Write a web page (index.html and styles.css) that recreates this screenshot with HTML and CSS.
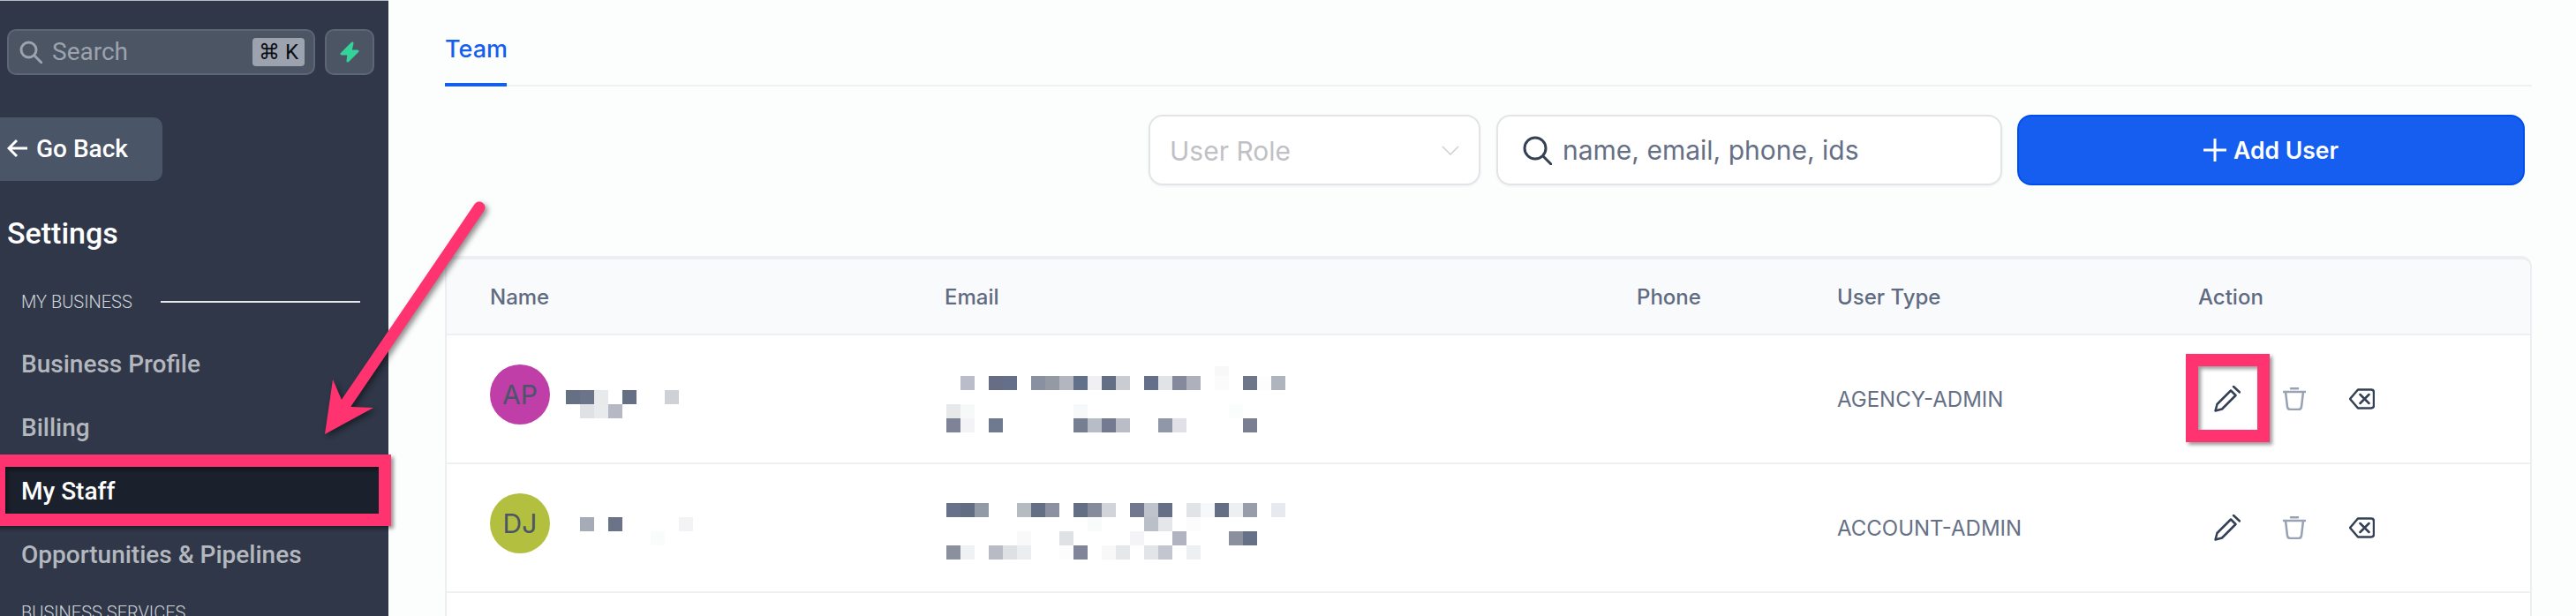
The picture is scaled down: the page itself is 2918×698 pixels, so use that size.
FILE: index.html
```html
<!DOCTYPE html>
<html lang="en">
<head>
<meta charset="utf-8">
<title>Settings - My Staff</title>
<link rel="stylesheet" href="styles.css">
</head>
<body>
<div class="app">
  <aside class="sidebar">
    <div class="search-row">
      <div class="side-search">
        <svg class="side-search-icon" viewBox="0 0 26 26"><circle cx="10.500" cy="10.500" r="8.500"/><path d="M17 17l8 8"/></svg>
        <span class="side-search-text">Search</span>
        <kbd class="kbd">⌘ K</kbd>
      </div>
      <div class="bolt-btn">
        <svg class="bolt" viewBox="0 0 22 24"><path d="M14 2 2 14h8l-1 8 11-11h-8z"/></svg>
      </div>
    </div>
    <div class="back">
      <svg class="back-arrow" viewBox="0 0 24 22"><path d="M23 11H2M11 2l-9 9 9 9"/></svg>
      <span>Go Back</span>
    </div>
    <h1 class="side-title">Settings</h1>
    <div class="section"><span>MY BUSINESS</span><i class="section-line"></i></div>
    <nav class="nav">
      <a class="nav-item">Business Profile</a>
      <a class="nav-item">Billing</a>
      <a class="nav-item active">My Staff</a>
      <a class="nav-item">Opportunities &amp; Pipelines</a>
    </nav>
    <div class="section section-two"><span>BUSINESS SERVICES</span></div>
  </aside>

  <main class="main">
    <div class="tabs"><a class="tab">Team</a></div>
    <div class="controls">
      <div class="field role">
        <span class="role-text">User Role</span>
        <svg class="chevron" viewBox="0 0 20 11"><path d="M1 1l9 9 9-9"/></svg>
      </div>
      <div class="field query">
        <svg class="query-icon" viewBox="0 0 33 33"><circle cx="14" cy="14" r="12"/><path d="M23 23l9 9"/></svg>
        <span>name, email, phone, ids</span>
      </div>
      <button class="add">
        <svg class="plus" viewBox="0 0 26 26"><path d="M13 0v26M0 13h26"/></svg>
        <span>Add User</span>
      </button>
    </div>

    <section class="card">
      <div class="row head">
        <div class="th">Name</div>
        <div class="th">Email</div>
        <div class="th">Phone</div>
        <div class="th">User Type</div>
        <div class="th">Action</div>
      </div>

      <div class="row">
        <div class="who">
          <div class="avatar ap">AP</div>
          <svg class="mosaic-name" width="144" height="34" viewBox="0 0 144 34">
            <rect x="0" y="2" width="16" height="16" fill="#667085"/><rect x="16" y="2" width="16" height="16" fill="#6b7489"/><rect x="32" y="2" width="16" height="16" fill="#e8e9eb"/><rect x="64" y="2" width="16" height="16" fill="#667085"/><rect x="112" y="2" width="16" height="16" fill="#d0d1d7"/>
            <rect x="16" y="18" width="16" height="16" fill="#e0e1e5"/><rect x="32" y="18" width="16" height="16" fill="#e9eaec"/><rect x="48" y="18" width="16" height="16" fill="#b6b9c3"/>
          </svg>
        </div>
        <div class="email">
          <svg class="mosaic-email" width="390" height="80" viewBox="0 0 390 80">
            <rect x="306" y="5" width="16" height="11" fill="#f7f8f7"/>
            <rect x="18" y="16" width="16" height="16" fill="#babcc9"/><rect x="50" y="16" width="16" height="16" fill="#666d85"/><rect x="66" y="16" width="16" height="16" fill="#64708a"/><rect x="98" y="16" width="16" height="16" fill="#8990a0"/><rect x="114" y="16" width="16" height="16" fill="#9499a4"/><rect x="130" y="16" width="16" height="16" fill="#b3b6bf"/><rect x="146" y="16" width="16" height="16" fill="#62708a"/><rect x="162" y="16" width="16" height="16" fill="#f0f0f2"/><rect x="178" y="16" width="16" height="16" fill="#636f85"/><rect x="194" y="16" width="16" height="16" fill="#cbccd1"/><rect x="226" y="16" width="16" height="16" fill="#64708a"/><rect x="242" y="16" width="16" height="16" fill="#e2e3e7"/><rect x="258" y="16" width="16" height="16" fill="#84899c"/><rect x="274" y="16" width="16" height="16" fill="#aeb1bb"/><rect x="306" y="16" width="16" height="16" fill="#fbfbfb"/><rect x="338" y="16" width="16" height="16" fill="#6e778a"/><rect x="354" y="16" width="16" height="16" fill="#fdfdfd"/><rect x="370" y="16" width="16" height="16" fill="#afb4bd"/>
            <rect x="2" y="48" width="16" height="16" fill="#e7e8e9"/><rect x="18" y="48" width="16" height="16" fill="#f7f9f8"/><rect x="146" y="48" width="16" height="16" fill="#f7f8fa"/><rect x="322" y="48" width="16" height="16" fill="#fbfdfc"/>
            <rect x="2" y="64" width="16" height="16" fill="#7e8397"/><rect x="18" y="64" width="16" height="16" fill="#f3f3f5"/><rect x="50" y="64" width="16" height="16" fill="#707a8f"/><rect x="146" y="64" width="16" height="16" fill="#767e92"/><rect x="162" y="64" width="16" height="16" fill="#b8bcc6"/><rect x="178" y="64" width="16" height="16" fill="#747b90"/><rect x="194" y="64" width="16" height="16" fill="#babdc6"/><rect x="242" y="64" width="16" height="16" fill="#9097a6"/><rect x="258" y="64" width="16" height="16" fill="#e0e0e6"/><rect x="338" y="64" width="16" height="16" fill="#7a7e91"/>
          </svg>
        </div>
        <div class="phone"></div>
        <div class="type">AGENCY-ADMIN</div>
        <div class="actions">
          <svg class="ic pencil" viewBox="0 0 30 30"><path d="M1.500 28.500l2-7.500 15.500-15.500 5.500 5.500L9 26.500zM22 1l7 6.500"/></svg>
          <svg class="ic trash" viewBox="0 0 26 26"><path d="M9 1.200h8M0 5h26M3 5l2 17q.4 3 3.500 3h9q3.100 0 3.500-3l2-17"/></svg>
          <svg class="ic del" viewBox="0 0 29 24"><path d="M1 12 10 1.500h15q3 0 3 3v15q0 3-3 3H10zM12.500 7l10 10M22.500 7l-10 10"/></svg>
        </div>
      </div>

      <div class="row">
        <div class="who">
          <div class="avatar dj">DJ</div>
          <svg class="mosaic-name" width="144" height="34" viewBox="0 0 144 34">
            <rect x="16" y="0" width="16" height="16" fill="#a6abb8"/><rect x="48" y="0" width="16" height="16" fill="#6b7389"/><rect x="128" y="0" width="16" height="16" fill="#f3f3f5"/><rect x="96" y="16" width="16" height="16" fill="#fafbfb"/>
          </svg>
        </div>
        <div class="email">
          <svg class="mosaic-email" width="390" height="80" viewBox="0 0 390 80">
            <rect x="2" y="14" width="16" height="16" fill="#67728a"/><rect x="18" y="14" width="16" height="16" fill="#616d82"/><rect x="34" y="14" width="16" height="16" fill="#929aa7"/><rect x="82" y="14" width="16" height="16" fill="#b6bbc2"/><rect x="98" y="14" width="16" height="16" fill="#636f85"/><rect x="114" y="14" width="16" height="16" fill="#8b91a1"/><rect x="146" y="14" width="16" height="16" fill="#636f85"/><rect x="162" y="14" width="16" height="16" fill="#858b9b"/><rect x="178" y="14" width="16" height="16" fill="#d3d4d9"/><rect x="210" y="14" width="16" height="16" fill="#72798e"/><rect x="226" y="14" width="16" height="16" fill="#bfc3cb"/><rect x="242" y="14" width="16" height="16" fill="#656f85"/><rect x="274" y="14" width="16" height="16" fill="#e2e3e7"/><rect x="290" y="14" width="16" height="16" fill="#f7f8fa"/><rect x="306" y="14" width="16" height="16" fill="#646f85"/><rect x="322" y="14" width="16" height="16" fill="#eeeff1"/><rect x="338" y="14" width="16" height="16" fill="#989daa"/><rect x="370" y="14" width="16" height="16" fill="#e8e9ee"/>
            <rect x="162" y="30" width="16" height="16" fill="#f9fbfa"/><rect x="226" y="30" width="16" height="16" fill="#bbc0c8"/><rect x="242" y="30" width="16" height="16" fill="#e5e6ea"/><rect x="274" y="30" width="16" height="16" fill="#fcfcfc"/>
            <rect x="82" y="46" width="16" height="16" fill="#f8f9f8"/><rect x="130" y="46" width="16" height="16" fill="#e0e1e4"/><rect x="210" y="46" width="16" height="16" fill="#f4f4f6"/><rect x="258" y="46" width="16" height="16" fill="#b1b3c0"/><rect x="322" y="46" width="16" height="16" fill="#8a909d"/><rect x="338" y="46" width="16" height="16" fill="#667087"/>
            <rect x="2" y="62" width="16" height="16" fill="#8a909e"/><rect x="18" y="62" width="16" height="16" fill="#f0f1f3"/><rect x="50" y="62" width="16" height="16" fill="#b8bbc4"/><rect x="66" y="62" width="16" height="16" fill="#dfe0e4"/><rect x="82" y="62" width="16" height="16" fill="#ecedef"/><rect x="130" y="62" width="16" height="16" fill="#fcfcfc"/><rect x="146" y="62" width="16" height="16" fill="#80859a"/><rect x="178" y="62" width="16" height="16" fill="#f8f8f8"/><rect x="194" y="62" width="16" height="16" fill="#e6e7e9"/><rect x="226" y="62" width="16" height="16" fill="#e3e4e8"/><rect x="242" y="62" width="16" height="16" fill="#c3c6cf"/><rect x="274" y="62" width="16" height="16" fill="#eeeff1"/>
          </svg>
        </div>
        <div class="phone"></div>
        <div class="type">ACCOUNT-ADMIN</div>
        <div class="actions">
          <svg class="ic pencil" viewBox="0 0 30 30"><path d="M1.500 28.500l2-7.500 15.500-15.500 5.500 5.500L9 26.500zM22 1l7 6.500"/></svg>
          <svg class="ic trash" viewBox="0 0 26 26"><path d="M9 1.200h8M0 5h26M3 5l2 17q.4 3 3.500 3h9q3.100 0 3.500-3l2-17"/></svg>
          <svg class="ic del" viewBox="0 0 29 24"><path d="M1 12 10 1.500h15q3 0 3 3v15q0 3-3 3H10zM12.500 7l10 10M22.500 7l-10 10"/></svg>
        </div>
      </div>
      <div class="row empty"></div>
    </section>
  </main>

  <div class="frame frame-staff"></div>
  <div class="frame frame-edit"></div>
  <svg class="pointer" viewBox="0 0 220 290">
    <path class="pointer-shaft" d="M187 15 36 237"/>
    <path class="pointer-head" d="M12 272 21 210 31 233 42 241 67 242z"/>
  </svg>
</div>
</body>
</html>
```
FILE: styles.css
```css
* { box-sizing: border-box; }
html, body { margin: 0; padding: 0; }
body { width: 2918px; height: 698px; overflow: hidden; background: #fcfdfd; font-family: "Inter", "Liberation Sans", sans-serif; }

.app { position: relative; display: flex; width: 2918px; height: 698px; overflow: hidden; }

/* Sidebar */
.sidebar { flex: 0 0 440px; height: 698px; overflow: hidden; background: #2f3748; border-top: 1px solid #b9bcc3; font-family: "Roboto", "Liberation Sans", sans-serif; }
.search-row { display: flex; gap: 11px; margin: 32px 0 0 8px; }
.side-search { display: flex; align-items: center; width: 349px; height: 52px; padding: 0 10px 0 12px; background: #4b5563; border: 2px solid #5d6676; border-radius: 10px; }
.side-search-icon { width: 26px; height: 26px; fill: none; stroke: #9ca3af; stroke-width: 3; stroke-linecap: round; }
.side-search-text { margin-left: 11px; font-size: 28px; line-height: 32px; color: #9ca3af; }
.kbd { display: flex; align-items: center; justify-content: center; width: 59px; height: 32px; margin-left: auto; background: #9ca3af; border-radius: 4px; font-family: "Roboto", "DejaVu Sans", sans-serif; font-size: 24px; color: #0b0f14; }
.bolt-btn { display: flex; align-items: center; justify-content: center; width: 56px; height: 52px; background: #4b5563; border: 2px solid #5d6676; border-radius: 10px; }
.bolt { width: 22px; height: 24px; fill: #34d399; stroke: #34d399; stroke-width: 3; stroke-linejoin: round; }

.back { display: flex; align-items: center; gap: 9px; width: 184px; height: 72px; margin-top: 48px; padding: 0 0 2px 8px; background: #4a5568; border-radius: 0 10px 10px 0; color: #fff; font-size: 28px; font-weight: 500; }
.back-arrow { width: 24px; height: 22px; fill: none; stroke: #fff; stroke-width: 3; }

.side-title { margin: 39px 0 0 8px; font-size: 34px; line-height: 40px; font-weight: 500; color: #fff; }

.section { display: flex; align-items: center; gap: 32px; height: 24px; margin: 46px 0 0 24px; font-size: 20px; font-weight: 300; color: #d1d5db; }
.section-line { display: block; width: 226px; height: 2px; background: #e5e7eb; }
.section-two { margin-top: 18px; }

.nav { display: flex; flex-direction: column; margin-top: 22px; }
.nav-item { display: flex; align-items: center; width: 430px; height: 72px; padding-left: 24px; font-size: 28px; font-weight: 500; color: #b4b7be; }
.nav-item.active { background: #1a202c; color: #fff; }

/* Main */
.main { flex: 1; min-width: 0; padding: 0 50px 0 64px; }
.tabs { display: flex; height: 98px; border-bottom: 2px solid #eef0f4; }
.tab { display: block; height: 98px; width: 70px; padding-top: 39px; border-bottom: 4px solid #155eef; font-size: 27px; line-height: 34px; font-weight: 500; color: #155eef; }

.controls { display: flex; justify-content: flex-end; gap: 17px; margin-top: 32px; padding-right: 8px; }
.field { display: flex; align-items: center; height: 80px; background: #fff; border: 2px solid #e3e4e8; border-radius: 16px; box-shadow: 0 1px 3px rgba(16, 24, 40, .06); font-size: 30px; }
.role { width: 376px; margin-right: 1px; padding: 0 22px 0 22px; justify-content: space-between; color: #bfc1c5; }
.role-text { padding-top: 2px; }
.chevron { width: 20px; height: 11px; fill: none; stroke: #d0d2d6; stroke-width: 1.600; }
.query { width: 573px; padding-left: 28px; color: #667085; }
.query-icon { flex: none; width: 33px; height: 33px; fill: none; stroke: #344054; stroke-width: 3; stroke-linecap: round; }
.query span { margin-left: 12px; }
.add { display: flex; align-items: center; justify-content: center; gap: 8px; width: 575px; height: 80px; background: #155eef; border: 2px solid #004eeb; border-radius: 16px; font-family: "Inter", sans-serif; font-size: 26.500px; font-weight: 600; color: #fff; }
.plus { width: 26px; height: 26px; fill: none; stroke: #fff; stroke-width: 3; stroke-linecap: round; }

/* Table */
.card { height: 500px; margin-top: 80px; overflow: hidden; background: #fff; border: 2px solid #eceef1; border-top-width: 4px; border-bottom: 0; border-radius: 12px 12px 0 0; }
.row { display: grid; grid-template-columns: 515px 784px 227px 409px 1fr; height: 146px; padding-left: 49px; border-bottom: 2px solid #eef0f4; }
.row.head { height: 86px; align-items: center; background: #f9fafb; }
.row.empty { height: 40px; border: 0; }
.th { font-size: 24px; font-weight: 500; color: #5f6b82; }
.who { display: flex; align-items: flex-start; gap: 18px; padding-top: 33px; }
.avatar { display: flex; align-items: center; justify-content: center; flex: 0 0 68px; height: 68px; border-radius: 50%; font-size: 30px; color: #4a5568; }
.avatar.ap { background: #bf3ea7; }
.avatar.dj { background: #b3bf3e; }
.mosaic-name { display: block; margin-top: 27px; }
.mosaic-email { display: block; margin-top: 30px; }
.type { align-self: center; font-size: 24px; color: #667085; }
.actions { display: flex; align-items: center; padding-left: 18px; }
.ic { display: block; fill: none; stroke-linecap: round; stroke-linejoin: round; stroke-width: 2.500; }
.pencil { width: 30px; height: 30px; stroke: #344054; }
.trash { width: 26px; height: 26px; margin-left: 48px; stroke: #98a2b3; }
.del { width: 29px; height: 24px; margin-left: 49px; stroke: #344054; }

/* Annotations laid over the screenshot */
.frame { position: absolute; border: 14px solid #ff3370; box-shadow: 3px 3px 4px rgba(0, 0, 0, .4), inset 3px 3px 4px rgba(0, 0, 0, .4); }
.frame-staff { left: -8px; top: 515px; width: 451px; height: 81px; }
.frame-edit { left: 2476px; top: 401px; width: 95px; height: 100px; }
.pointer { position: absolute; left: 356px; top: 220px; width: 220px; height: 290px; overflow: visible; filter: drop-shadow(3px 3px 3px rgba(0, 0, 0, .45)); }
.pointer-shaft { fill: none; stroke: #ff3370; stroke-width: 13; stroke-linecap: round; }
.pointer-head { fill: #ff3370; }
```
